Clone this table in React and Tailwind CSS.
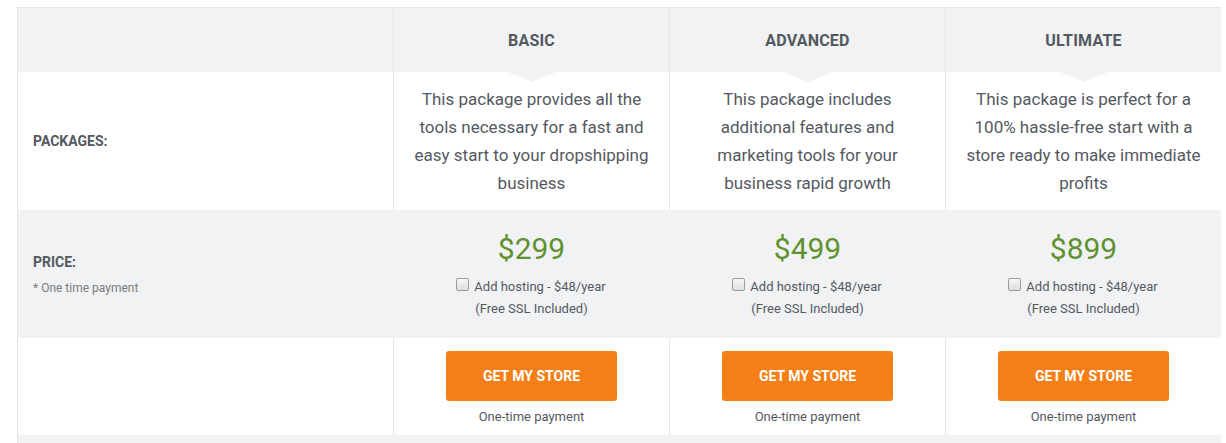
import React from "react";

const plans = [
    {
        name: "BASIC",
        desc: ["This package provides all the", "tools necessary for a fast and", "easy start to your dropshipping", "business"],
        price: "$299",
    },
    {
        name: "ADVANCED",
        desc: ["This package includes", "additional features and", "marketing tools for your", "business rapid growth"],
        price: "$499",
    },
    {
        name: "ULTIMATE",
        desc: ["This package is perfect for a", "100% hassle-free start with a", "store ready to make immediate", "profits"],
        price: "$899",
    },
];

const App = () => {
    return (
        <div className="min-h-screen bg-white pt-[7px] pl-[17px] font-['Roboto',sans-serif] text-[#54595f]">
            <div className="w-[1204px] border-t border-l border-[#e5e6e8] grid grid-cols-[375px_276px_276px_276px]">
                {/* header row */}
                <div className="h-[64px] bg-[#f1f2f4]"></div>
                {plans.map(plan => (
                    <div key={plan.name} className="relative h-[64px] bg-[#f1f2f4] border-l border-[#e5e6e8] flex items-center justify-center pt-[2px]">
                        <span className="text-[16px] font-bold tracking-[0.2px]">{plan.name}</span>
                        <span className="absolute z-10 top-full left-1/2 -translate-x-1/2 w-0 h-0 border-l-[24px] border-r-[24px] border-t-[10px] border-l-transparent border-r-transparent border-t-[#f1f2f4]"></span>
                    </div>
                ))}

                {/* packages row */}
                <div className="h-[138px] bg-white flex items-center pl-[15px]">
                    <span className="text-[14px] font-bold">PACKAGES:</span>
                </div>
                {plans.map(plan => (
                    <div key={plan.name} className="h-[138px] bg-white border-l border-[#e5e6e8] flex flex-col items-center justify-center text-center text-[17px] leading-[28px]">
                        {plan.desc.map(line => (
                            <span key={line}>{line}</span>
                        ))}
                    </div>
                ))}

                {/* price row */}
                <div className="h-[128px] bg-[#f1f2f4] flex flex-col justify-center pl-[15px] pt-[4px]">
                    <span className="text-[14px] font-bold leading-[20px] mt-[-3px]">PRICE:</span>
                    <span className="text-[12px] text-[#7a7a7a] leading-[20px] mt-[6px]">* One time payment</span>
                </div>
                {plans.map(plan => (
                    <div key={plan.name} className="h-[128px] bg-[#f1f2f4] border-l border-[#f1f2f4] flex flex-col items-center justify-center pt-[2px]">
                        <span className="text-[30px] leading-[36px] text-[#5f922e]">{plan.price}</span>
                        <label className="flex items-center gap-[5px] text-[13px] leading-[22px] mt-[9px] pr-[1px]">
                            <input type="checkbox" className="appearance-none w-[13px] h-[13px] border border-[#9a9a9a] rounded-[2px] bg-gradient-to-b from-[#f7f7f7] to-[#dedede] mt-[-4px]" />
                            <span>Add hosting - $48/year</span>
                        </label>
                        <span className="text-[13px] leading-[22px]">(Free SSL Included)</span>
                    </div>
                ))}

                {/* button row */}
                <div className="h-[97px] bg-white"></div>
                {plans.map(plan => (
                    <div key={plan.name} className="h-[97px] bg-white border-l border-[#e5e6e8] flex flex-col items-center pt-[13px]">
                        <button className="w-[171px] h-[50px] rounded-[3px] bg-[#f47f17] text-white text-[14px] font-bold">GET MY STORE</button>
                        <span className="text-[13px] leading-[20px] mt-[6px]">One-time payment</span>
                    </div>
                ))}

                {/* next row start */}
                <div className="col-span-4 h-[40px] bg-[#f1f2f4]"></div>
            </div>
        </div>
    );
};

export default App;
